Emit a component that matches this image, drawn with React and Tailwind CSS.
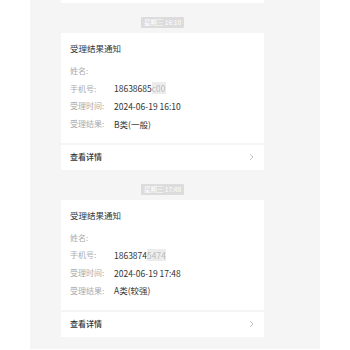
import React from "react";

const font = { fontFamily: '"Noto Sans CJK SC", "Noto Sans", sans-serif' };

const notices = [
  {
    week: "星期三 16:10",
    phone: "18638685",
    masked: "c00",
    time: "2024-06-19 16:10",
    result: "B类(一般)",
  },
  {
    week: "星期三 17:48",
    phone: "1863874",
    masked: "5474",
    time: "2024-06-19 17:48",
    result: "A类(较强)",
  },
];

const Row = ({ label, children }) => (
  <div className="flex items-center h-[17.7px]">
    <span className="w-[44px] text-[8px] text-[#aaaaaa]">{label}</span>
    <span className="text-[8.5px] text-[#333333]">{children}</span>
  </div>
);

const Chevron = () => (
  <svg width="5" height="8" viewBox="0 0 5 8" fill="none">
    <path d="M1 1l3 3-3 3" stroke="#bdbdbd" strokeWidth="0.9" />
  </svg>
);

const NoticeCard = ({ item }) => (
  <div className="w-[203px] flex flex-col">
    <div className="flex justify-center mt-[14px] mb-[5px]">
      <span className="bg-[#dcdcdc] text-white text-[6.5px] leading-[11px] px-[3px] rounded-[1px]">
        {item.week}
      </span>
    </div>
    <div className="bg-white">
      <div className="px-[9px] pt-[8px] pb-[10px]">
        <div className="text-[8.5px] leading-[14px] text-[#333333] mb-[7px]">受理结果通知</div>
        <Row label="姓名:" />
        <Row label="手机号:">
          {item.phone}
          <span className="text-[#bbbbbb] bg-[#ececec] blur-[0.5px]">{item.masked}</span>
        </Row>
        <Row label="受理时间:">{item.time}</Row>
        <Row label="受理结果:">{item.result}</Row>
      </div>
      <div className="h-[2px] bg-[#f5f5f5]" />
      <div className="h-[25px] px-[9px] flex items-center justify-between">
        <span className="text-[8px] text-[#333333] font-medium">查看详情</span>
        <span className="mr-[1px]">
          <Chevron />
        </span>
      </div>
    </div>
  </div>
);

export default function App() {
  return (
    <div className="w-[350px] h-[350px] bg-white overflow-hidden" style={font}>
      <div className="ml-[30px] w-[290px] h-[349px] bg-[#f5f5f5] pl-[31px] flex flex-col">
        <div className="w-[203px] h-[3px] bg-white" />
        {notices.map((n) => (
          <NoticeCard key={n.week} item={n} />
        ))}
      </div>
    </div>
  );
}
